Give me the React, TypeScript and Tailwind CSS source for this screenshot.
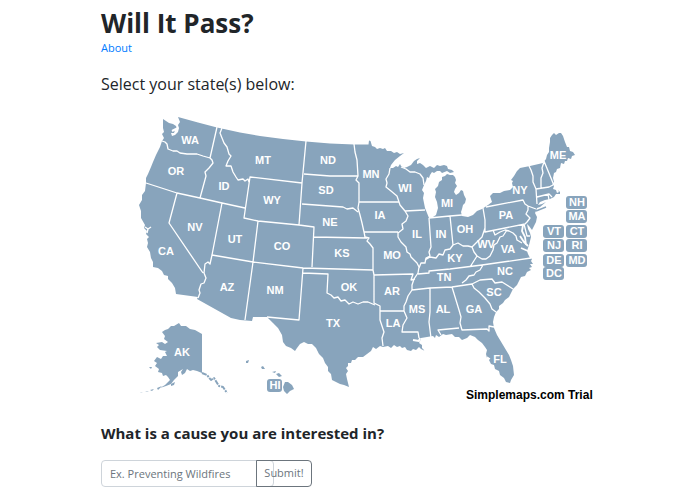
const labels: [string, number, number][] = [
  ["WA", 190, 140], ["OR", 176, 171], ["CA", 166, 251], ["ID", 224, 186], ["NV", 195, 227],
  ["MT", 263, 160], ["WY", 272, 200], ["UT", 235, 239], ["CO", 282, 246], ["AZ", 227, 287],
  ["NM", 275, 290], ["ND", 328, 160], ["SD", 326, 190], ["NE", 330, 222], ["KS", 342, 253],
  ["OK", 349, 287], ["TX", 333, 323], ["MN", 371, 174], ["IA", 380, 215], ["MO", 392, 255],
  ["AR", 392, 291], ["LA", 393, 323], ["WI", 405, 188], ["IL", 417, 234], ["IN", 441, 234],
  ["MI", 447, 203], ["OH", 465, 229], ["KY", 455, 258], ["TN", 444, 277], ["MS", 417, 309],
  ["AL", 443, 309], ["GA", 474, 309], ["FL", 500, 359], ["SC", 494, 292], ["NC", 505, 271],
  ["VA", 508, 249], ["WV", 486, 244], ["PA", 506, 215], ["NY", 520, 190], ["ME", 558, 155],
  ["AK", 182, 352],
];

const badges: [string, number, number][] = [
  ["NH", 577, 202], ["MA", 577, 216], ["VT", 554, 231], ["CT", 577, 231], ["NJ", 554, 245],
  ["RI", 577, 245], ["DE", 554, 260], ["MD", 577, 260], ["DC", 554, 273],
];

const mainland =
  "M163 119L166 121L169 123L173 124L176 126L177 129L175 130L174 133L171 133L172 136L175 135L178 132L179 128L178 125L180 122L178 117L198 122.5L217 127.5L240 132.5L260 136L283 139L306 141.5L330 143.5L354 144.5H368.5L369 140.5L370.5 141L372 146L375 147L377 149L380 148L383 149L385 148L387 151L391 151L394 153L397 152L400 154L404 153L400 156L395 160L391 165L390 168L393 168L396 166L398 167L400 164L401 166L404 168L407 167L411 165L414 161L417 159L420 158L417 161L417 164L420 163L423 165L426 168L430 166L434 168L437 165L440 166L444 165L447 166L448 169L452 170L454 172L450 173L447 171L442 173L440 171L437 171L434 173L432 172L430 175L429 178L427 177L426 181L424 185L422 190L424 193L423 198L424 203L425 208L427 213L429 218L433 217L436 215L438 208L437 202L435 197L436 192L435 189L438 186L439 182L442 180L442 177L445 176L447 174L450 175L453 175L455 177L456 180L455 183L457 186L455 189L454 192L456 195L459 193L461 190L463 191L464 195L466 199L465 203L463 205L462 209L461 212L462 216L468 217L473 215L477 211L482 209L488 205L492 202L490 196L493 193L500 193L504 191L510 190L513 187L512 183L513 181L511 180L514 176L517 171L520 168L530 166L543 163L546 159L547 155L549 152L549 148L550 142L550 138L552 135L554 133L556 135L559 133L561 133L563 136L565 142L567 147L569 147L570 151L573 152L575 155L572 156L571 159L568 158L567 161L565 161L564 164L561 163L560 168L557 169L556 172L554 173L553 178L554 182L552 184L554 186L553 189L556 190L557 193L559 192L558 190L560 192L560 194L556 194L554 197L550 199L545 200L540 202L538 205L542 204L546 202L540 207L537 208L536 211L535 213L537 217L536 222L534 226L532 230L529 226L527 224L528 229L530 233L531 237L530 241L529 245L528 248L527 251L528 254L530 258L532 259L531 261L533 264L530 264L532 267L529 268L531 270L527 272L525 276L521 277L519 281L517 285L513 289L511 293L509 297L505 300L503 303L499 306L499 309L496 312L494 317L493 322L494 328L497 335L503 345L509 355L511 360L513 366L514 375L511 380L510 383L506 382L504 378L500 375L499 371L495 369L494 365L491 364L489 360L490 358L487 358L486 354L487 350L485 347L482 343L478 340L475 337L470 335L467 338L462 340L459 337L455 337L452 334L446 335L443 334L439 337L436 335L435 338L433 336L427 337L421 338L420 341L419 343L422 345L422 348L425 351L421 349L419 347L416 350L413 349L411 351L407 350L405 347L402 348L400 346L397 347L394 345L391 348L388 346L383 347L380 346L376 349L373 347L371 351L367 354L363 357L358 357L355 360L352 360L351 363L348 363L348 366L346 368L348 371L346 374L347 379L348 383L349 387L344 385L340 384L336 382L332 380L331 374L328 371L328 367L325 363L323 358L319 354L316 348L312 344L308 344L304 342L300 344L297 348L295 351L291 348L286 346L283 342L282 335L278 328L273 323L267 317H253L252 321L240 320L231 318L197 299L198 297L176 294L175 288L172 283L168 279L168 276L164 275L162 271L158 268L153 267L153 262L151 258L150 252L147 247L148 243L147 239L149 237L146 234L147 231L144 228L145 225L141 218L141 211L139 205L142 200L142 195L145 191L146 183L146 178L148 174L151 167L153 162L156 155L160 147L162 141L164 138L162 134L164 132L163 128Z";

const borders =
  "M162 141L165 142L167 144L168 149L173 151L177 151L180 153L187 154L197 154L203 156L210 158M217 127L210 158L212 160L213 163L209 168L205 172L206 176L200 198M146 183L177 193L200 198L222 203L245 208M222 128L220 133L222 138L224 143L227 147L229 154L231 156L228 161L226 166L231 166L233 172L236 177L238 180L243 179L245 181L248 179L249 182M302 183L250 177L244 218L258 221L299 225L314 227L312 267M306 141L302 183L299 225M304 174L330 176L358 176M302 204L343 207L347 209L353 208L358 212M354 144L355 152L357 160L358 176L356 180L359 183V202L358 208L360 215L362 223L364 232L365 237L369 238L367 241L370 244L373 248L373 270L374 275V303L380 306V320L382 326L384 332L382 338L383 346M359 202H399M390 168L389 174L386 179L387 183L386 187L391 191L397 196L399 202L400 205L405 211L408 216L406 221L402 224L403 229L398 233L398 237L401 242L406 247L407 252L410 254L411 257L417 263L419 267M401 167L406 169L410 172L415 172L420 174L423 178L424 185M405 211L425 210M429 218L431 247L429 252L430 256L426 258L425 263L421 263L419 268M429 218L450 216L462 215M450 216L453 245M425 260L430 257L436 258L439 254L443 255L445 250L450 249L453 245L458 243L463 246L468 246L472 247L477 242L480 239L482 237L485 228V220L483 208M472 247L474 252L477 256L470 267M418 274L429 273V271L450 269L482 265L531 258M483 265L480 270L476 272L474 275L469 276L466 280L462 283M412 290L430 288L452 287L472 284L480 280L492 279L495 283L502 282L513 289M472 284L474 288L479 292L485 298L490 304L492 309L496 312M452 287L459 310L461 317L460 323L462 330L487 329L489 331V326L494 327M459 328L438 330L441 335M430 288L430 312L429 322L431 338M419 267L418 273L414 279L412 285L412 290L408 296L406 302L404 306L404 311L407 318L403 325L402 332L418 332L419 338M374 275L413 274L411 280L415 279M380 311H404M364 232H398M313 237L367 238M253 262L303 268L373 270M258 221L253 262L245 320M212 255L253 262M222 203L212 255L210 264L208 262L205 264L204 273L206 278L204 283L201 284L199 290L200 293L198 298M177 193L169 223L203 273M303 268L299 320L267 317M303 273L328 274L327 293L331 295L334 298L338 297L341 301L345 300L349 304L353 302L358 304L363 302L368 302L375 305M486 207L523 200L525 204L528 206L536 209M528 206L528 210L526 214L530 218L527 222L525 224L485 232V220M529 166L531 170L533 176L533 182L536 189L537 204M544 162L542 168L543 173L541 178L541 188M544 161L553 183M536 189L549 187L553 185M537 197L549 194L552 197M548 194L549 200M493 230L495 235L500 232L505 230L509 231L513 233L516 236L517 240L522 243M507 230L503 236L500 237L497 243L494 245L493 250L490 256L486 259L482 259L477 256M524 224L527 236L530 236";

const alaska =
  "M162 332L165 330L168 329L171 326L174 326L179 323L181 326L186 326L190 329L195 330L202 334V373L197 371L193 370L190 371L187 369L185 373L182 375L181 372L183 369L178 372L178 376L174 380L171 384L166 386L160 388L165 385L170 380L168 377L166 375L163 376L162 373L158 372L159 369L155 366L157 363L154 361L157 357L161 359L163 356L167 356L165 352L167 351L160 350L157 347L159 345L156 343L162 342L165 344L168 342L164 339L165 336Z";

const islands =
  "M157 388L162 386L158 390ZM150 390L154 389L152 391ZM145 392L149 391L147 392ZM140 393L143 392L141 393ZM149 367L152 367L151 369ZM171 384L175 382L174 385L171 386ZM246 361L249 360L248 363L246 363ZM261 367L263 366L265 369L262 369ZM272 372L276 371L275 373ZM276 374L279 373L282 376L279 377ZM285 382L288 382L292 385L294 389L290 391L287 394L284 391L283 387Z";

function StateMap() {
  return (
    <svg viewBox="101 105 495 304" className="block w-full overflow-visible" role="group" aria-label="Map of the United States">
      <g fill="#88a4bc" strokeLinejoin="round">
        <path d={mainland} />
        <path d={alaska} />
        <path d={islands} />
        <path d="M202 373L207 375L211 380L214 378L219 386L223 387L227 393" fill="none" stroke="#88a4bc" strokeWidth="2" strokeDasharray="5 1 2 1" />
        <path d="M536 211L541 209L546 207" fill="none" stroke="#88a4bc" strokeWidth="1.5" />
      </g>
      <g fill="none" stroke="#fff" strokeLinejoin="round">
        <path d={borders} strokeWidth="1.3" />
        <path d="M523 225L522 231L525 237L526 245M520 236L524 242L528 246M521 248L528 251" strokeWidth="1.8" />
        <path d="M145 227L148 229L151 227M148 229L147 233M487 357L490 359" strokeWidth="1.4" />
        <path d="M413 340L419 341L420 338M172 131L178 128" strokeWidth="2" />
      </g>
      <g fill="#fff" textAnchor="middle" className="font-[family-name:'Liberation_Sans',Arial,sans-serif] text-[11px] font-bold">
        {labels.map(([name, x, y]) => (
          <text key={name} x={x} y={y + 4}>{name}</text>
        ))}
        {badges.map(([name, x, y]) => (
          <g key={name}>
            <rect x={x - 11} y={y - 6} width="21" height="13" rx="3" fill="#88a4bc" />
            <text x={x} y={y + 4}>{name}</text>
          </g>
        ))}
        <rect x="267" y="379" width="15" height="13" rx="3" fill="#88a4bc" />
        <text x="275" y="389">HI</text>
      </g>
      <text x="466" y="399" className="fill-black font-[family-name:'Liberation_Sans',Arial,sans-serif] text-[12px] font-bold">
        Simplemaps.com Trial
      </text>
    </svg>
  );
}

export default function App() {
  return (
    <main className="bg-white pt-[6px] pr-[99px] pb-2 pl-[101px] font-[family-name:'Open_Sans','Noto_Sans',sans-serif] text-[#212529]">
      <h1 className="text-[26px] leading-[34px] font-bold">Will It Pass?</h1>
      <a href="#about" className="block w-fit text-[11px] leading-4 text-[#007bff]">About</a>
      <h2 className="mt-4 text-base leading-6">Select your state(s) below:</h2>
      <div className="mt-[9px]">
        <StateMap />
      </div>
      <form onSubmit={(e) => e.preventDefault()}>
        <label htmlFor="cause" className="mt-3 block text-[15px] leading-6 font-bold">
          What is a cause you are interested in?
        </label>
        <div className="mt-[15px] flex text-[11px]">
          <input
            id="cause"
            placeholder="Ex. Preventing Wildfires"
            className="h-[27px] w-[173px] rounded-sm border border-[#ced4da] px-2 placeholder:text-[#6c757d]"
          />
          <button className="-ml-[18px] h-[27px] w-14 rounded-r-sm border border-[#6c757d] text-center text-[#6c757d]">
            Submit!
          </button>
        </div>
      </form>
    </main>
  );
}
